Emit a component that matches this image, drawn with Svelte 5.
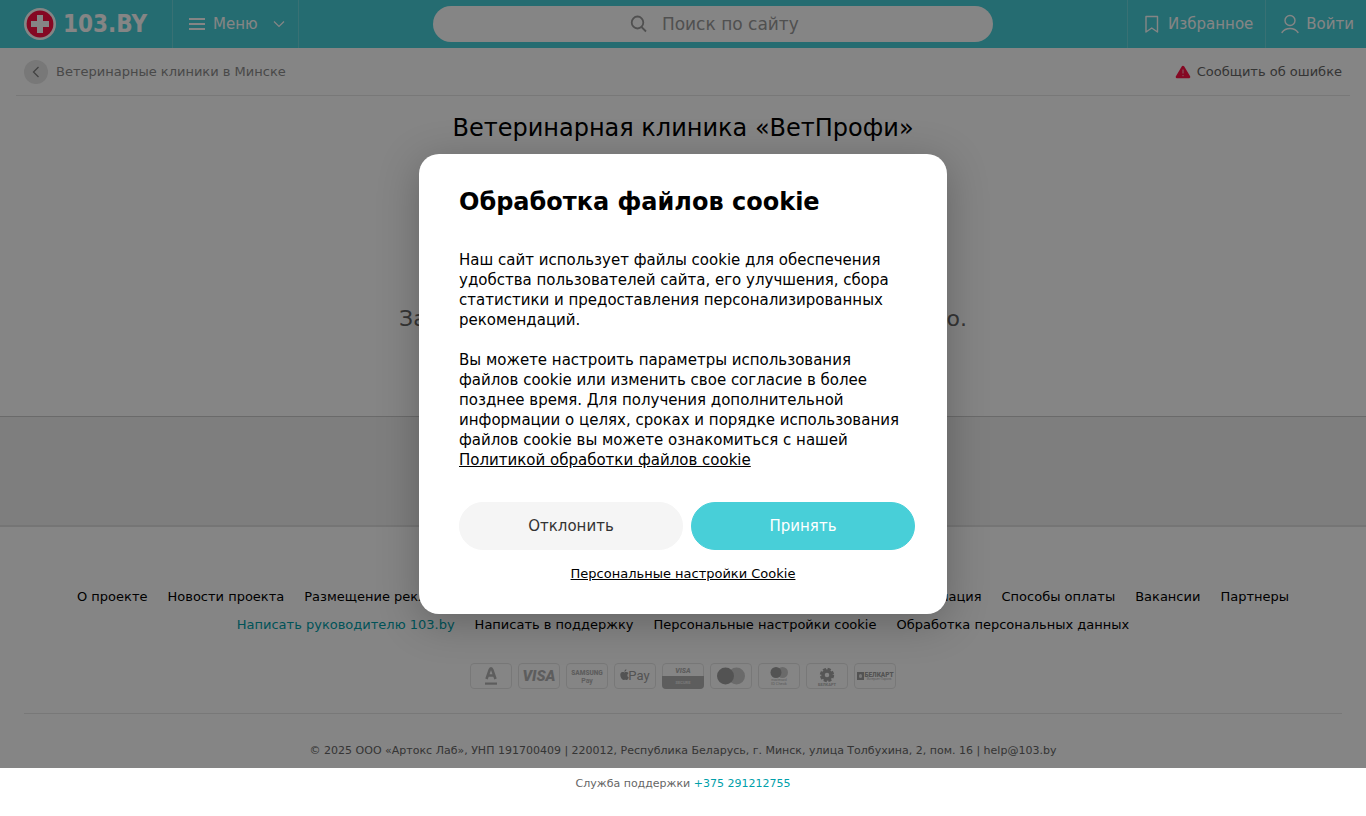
<!-- App.svelte -->
<script lang="ts">
  interface FooterLink {
    label: string;
    accent?: boolean;
  }

  const mainLinks: FooterLink[] = [
    { label: 'О проекте' },
    { label: 'Новости проекта' },
    { label: 'Размещение рекламы' },
    { label: 'Публичный договор' },
    { label: 'Политика использования' },
    { label: 'Правовая информация' },
    { label: 'Способы оплаты' },
    { label: 'Вакансии' },
    { label: 'Партнеры' },
  ];

  const supportLinks: FooterLink[] = [
    { label: 'Написать руководителю 103.by', accent: true },
    { label: 'Написать в поддержку' },
    { label: 'Персональные настройки cookie' },
    { label: 'Обработка персональных данных' },
  ];

  const payments = [
    'alfa', 'visa', 'samsung', 'apple', 'visa-secure',
    'mastercard', 'mastercard-id', 'belkart', 'belkart-internet',
  ];

  let query = $state('');
  let dialogOpen = $state(true);

  function closeDialog() {
    dialogOpen = false;
  }
</script>

<div class="page">
  <header class="header">
    <a class="logo" href="/" aria-label="103.by">
      <svg width="32" height="32" viewBox="0 0 32 32" aria-hidden="true">
        <circle cx="16" cy="16" r="16" fill="#fff" />
        <circle cx="16" cy="16" r="13.4" fill="#ff1144" />
        <path d="M13 7h6v6h6v6h-6v6h-6v-6H7v-6h6z" fill="#fff" />
      </svg>
      <span class="logo-text">103.BY</span>
    </a>

    <button class="menu" type="button">
      <svg width="16" height="12" viewBox="0 0 16 12" stroke="currentColor" stroke-width="2" aria-hidden="true">
        <path d="M0 1h16M0 6h16M0 11h16" />
      </svg>
      <span>Меню</span>
      <svg class="menu-arrow" width="12" height="8" viewBox="0 0 12 8" fill="none" stroke="currentColor" stroke-width="1.2" aria-hidden="true">
        <path d="M1 1.5l5 5 5-5" />
      </svg>
    </button>

    <div class="search-wrap">
      <label class="search">
        <svg width="18" height="18" viewBox="0 0 18 18" fill="none" stroke="currentColor" stroke-width="1.8" aria-hidden="true">
          <ellipse cx="7.5" cy="7.5" rx="5.8" ry="6" />
          <path d="M11.5 12l4.5 4.5" />
        </svg>
        <input type="text" placeholder="Поиск по сайту" aria-label="Поиск по сайту" bind:value={query} />
      </label>
    </div>

    <a class="header-link" href="/favorites">
      <svg width="18" height="20" viewBox="0 0 18 20" fill="none" stroke="currentColor" stroke-width="1.4" stroke-linejoin="round" aria-hidden="true">
        <path d="M3 2.500h11.500v15.500L8.750 14 3 18z" />
      </svg>
      Избранное
    </a>
    <a class="header-link" href="/login">
      <svg width="18" height="20" viewBox="0 0 18 20" fill="none" stroke="currentColor" stroke-width="1.4" stroke-linecap="round" aria-hidden="true">
        <circle cx="9" cy="6.5" r="5" />
        <path d="M1 18.5c2-3 4.500-4 8-4s6 1 8 4" />
      </svg>
      Войти
    </a>
  </header>

  <nav class="crumbs">
    <a class="crumb" href="/vet">
      <span class="crumb-back">
        <svg width="8" height="12" viewBox="0 0 8 12" fill="none" stroke="currentColor" stroke-width="1.3" aria-hidden="true">
          <path d="M6.500 1L1.500 6l5 5" />
        </svg>
      </span>
      Ветеринарные клиники в Минске
    </a>
    <a class="report" href="/report">
      <svg width="16" height="14" viewBox="0 0 16 14" aria-hidden="true">
        <path d="M8 2L14 12H2z" fill="#ff1144" stroke="#ff1144" stroke-width="2.600" stroke-linejoin="round" />
        <path d="M8 4.500v4M8 10v1.200" stroke="#fff" stroke-opacity="0.7" />
      </svg>
      Сообщить об ошибке
    </a>
  </nav>

  <main class="place">
    <h1>Ветеринарная клиника «ВетПрофи»</h1>
    <p>Запрошенное заведение постоянно недоступно.</p>
  </main>

  <div class="strip"></div>

  <footer class="footer">
    <nav class="links">
      <div class="links-row">
        {#each mainLinks as link}
          <a href="/info">{link.label}</a>
        {/each}
      </div>
      <div class="links-row">
        {#each supportLinks as link}
          <a href="/info" class:accent={link.accent}>{link.label}</a>
        {/each}
      </div>
    </nav>

    <div class="payments">
      {#each payments as name}
        <svg class="payment" width="42" height="26" viewBox="0 0 42 26" aria-hidden="true">
          <rect x="0.5" y="0.5" width="41" height="25" rx="3.5" fill="none" stroke="#e6e6e6" />
          {#if name === 'alfa'}
            <path d="M16.500 16L19.800 6.500q1.200-2.500 2.400 0L25.500 16M18 12.500h6" fill="none" stroke="#b3b3b3" stroke-width="2.600" />
            <rect x="15" y="19.500" width="12" height="2.200" />
          {:else if name === 'visa'}
            <text x="21" y="18" font-size="15" font-weight="900" font-style="italic">VISA</text>
          {:else if name === 'samsung'}
            <text x="21" y="12" font-size="6.500" font-weight="900">SAMSUNG</text>
            <text x="21" y="20" font-size="7" font-weight="600">Pay</text>
          {:else if name === 'apple'}
            <path class="strong" d="M10.500 9.500c1-.7 3.200-.6 4 .7-1.700 1.100-1.400 3.500.3 4.200-.6 1.600-1.500 2.800-2.500 2.600-.8-.4-1.400-.4-2.200 0-2.200.7-4.600-4.300-3.600-6.400.8-1.600 2.500-1.800 4-1.100zM10.300 8.800c0-1.400.8-2.300 2.100-2.600.1 1.400-.8 2.500-2.100 2.600z" />
            <text class="strong" x="25" y="17" font-size="13">Pay</text>
          {:else if name === 'visa-secure'}
            <path d="M0 13h42v9a4 4 0 0 1-4 4H4a4 4 0 0 1-4-4z" />
            <text x="21" y="10" font-size="7" font-weight="900" font-style="italic">VISA</text>
            <text x="21" y="21" font-size="4" font-weight="700" class="light">SECURE</text>
          {:else if name === 'mastercard'}
            <circle cx="26.500" cy="13" r="8.500" class="pale" />
            <circle cx="15.500" cy="13" r="8.500" class="strong" />
          {:else if name === 'mastercard-id'}
            <circle cx="24.500" cy="9.500" r="5.500" class="pale" />
            <circle cx="18" cy="9.500" r="5.500" class="strong" />
            <text x="21" y="18" font-size="3">mastercard</text>
            <text x="21" y="22" font-size="4">ID Check</text>
          {:else if name === 'belkart'}
            <circle cx="21" cy="12" r="4" fill="none" stroke="#a6a6a6" stroke-width="3.500" />
            <circle cx="21" cy="12" r="6" fill="none" stroke="#a6a6a6" stroke-width="2.400" stroke-dasharray="3.100 1.600" />
            <text x="21" y="23" font-size="4" font-weight="700">БЕЛКАРТ</text>
          {:else}
            <rect x="3" y="9" width="7" height="8" class="strong" />
            <rect x="5" y="11" width="3" height="4" rx="1.500" class="light" />
            <text x="25" y="14" font-size="6.500" font-weight="900" class="strong">БЕЛКАРТ</text>
            <text x="25" y="17" font-size="3">Интернет-Пароль</text>
          {/if}
        </svg>
      {/each}
    </div>

    <p class="copyright">
      © 2025 ООО «Артокс Лаб», УНП 191700409 | 220012, Республика Беларусь, г. Минск, улица Толбухина, 2, пом. 16 | help@103.by
    </p>
  </footer>

  {#if dialogOpen}
    <div class="overlay">
      <div class="dialog" role="dialog" aria-labelledby="cookie-title">
        <h2 id="cookie-title">Обработка файлов cookie</h2>
        <p>
          Наш сайт использует файлы cookie для обеспечения удобства пользователей сайта, его улучшения, сбора
          статистики и предоставления персонализированных рекомендаций.
        </p>
        <p>
          Вы можете настроить параметры использования файлов cookie или изменить свое согласие в более позднее
          время. Для получения дополнительной информации о целях, сроках и порядке использования файлов cookie вы
          можете ознакомиться с нашей <a href="/cookie-policy">Политикой обработки файлов cookie</a>
        </p>
        <div class="actions">
          <button class="btn" type="button" onclick={closeDialog}>Отклонить</button>
          <button class="btn btn--primary" type="button" onclick={closeDialog}>Принять</button>
        </div>
        <button class="settings" type="button">Персональные настройки Cookie</button>
      </div>
    </div>
  {/if}
</div>

<p class="support">Служба поддержки <a href="tel:+375291212755">+375 291212755</a></p>

<style>
  :global(body) {
    background: #fff;
    color: #000;
    font-family: 'DejaVu Sans', sans-serif;
  }

  a {
    color: inherit;
    text-decoration: none;
  }

  button {
    font-family: inherit;
    cursor: pointer;
  }

  .page {
    position: relative;
  }

  /* Header */
  .header {
    display: flex;
    height: 48px;
    background: #48cfd8;
    color: #fff;
    font-size: 15px;
  }

  .logo {
    display: flex;
    align-items: center;
    gap: 7px;
    padding: 0 25px 0 24px;
  }

  .logo-text {
    font-family: 'DejaVu Sans Condensed', 'DejaVu Sans', sans-serif;
    font-size: 24px;
    font-weight: 700;
  }

  .menu {
    display: flex;
    align-items: center;
    gap: 8px;
    padding: 0 13px 0 16px;
    border: 0;
    border-left: 1px solid rgba(255, 255, 255, 0.2);
    border-right: 1px solid rgba(255, 255, 255, 0.2);
    background: none;
    color: inherit;
    font-size: 15px;
  }

  .menu-arrow {
    margin-left: 7px;
  }

  .search-wrap {
    flex: 1;
    display: flex;
    align-items: center;
    justify-content: center;
  }

  .search {
    box-sizing: border-box;
    display: flex;
    align-items: center;
    justify-content: center;
    gap: 14px;
    width: 560px;
    height: 36px;
    padding-left: 6px;
    border-radius: 18px;
    background: #fff;
    color: #999;
  }

  .search input {
    width: 140px;
    padding: 0;
    border: 0;
    outline: 0;
    background: none;
    font-family: inherit;
    font-size: 17px;
  }

  .search input::placeholder {
    color: #999;
  }

  .header-link {
    display: flex;
    align-items: center;
    gap: 7px;
    padding: 0 12px 0 15px;
    border-left: 1px solid rgba(255, 255, 255, 0.2);
  }

  /* Breadcrumbs */
  .crumbs {
    display: flex;
    align-items: center;
    justify-content: space-between;
    height: 47px;
    margin: 0 16px;
    padding: 0 8px;
    border-bottom: 1px solid #e6e6e6;
    font-size: 13px;
  }

  .crumb,
  .report {
    display: flex;
    align-items: center;
  }

  .crumb {
    gap: 8px;
    color: #8c8c8c;
  }

  .crumb-back {
    display: flex;
    align-items: center;
    justify-content: center;
    width: 24px;
    height: 24px;
    border-radius: 50%;
    background: #e6e6e6;
    color: #808080;
  }

  .report {
    gap: 6px;
    color: #666;
  }

  /* Place */
  .place {
    height: 320px;
    text-align: center;
  }

  .place h1 {
    margin: 0;
    padding-top: 16px;
    font-size: 24px;
    font-weight: 400;
    line-height: 32px;
  }

  .place p {
    margin: 159px 0 0;
    color: #666;
    font-size: 22px;
    line-height: 32px;
  }

  .strip {
    height: 108px;
    border-top: 1px solid #ccc;
    border-bottom: 2px solid #e0e0e0;
    background: #f2f2f2;
  }

  /* Footer */
  .footer {
    padding: 56px 24px 0;
  }

  .links-row {
    display: flex;
    justify-content: center;
    gap: 20px;
    font-size: 13px;
    line-height: 28px;
    white-space: nowrap;
  }

  .links-row .accent {
    color: #00a0aa;
  }

  .payments {
    display: flex;
    justify-content: center;
    gap: 6px;
    padding: 24px 0;
    border-bottom: 1px solid #e6e6e6;
  }

  .payment {
    fill: #b3b3b3;
    font-family: Roboto, sans-serif;
    text-anchor: middle;
  }

  .payment .pale {
    fill: #ccc;
  }

  .payment .strong {
    fill: #a0a0a0;
  }

  .payment .light {
    fill: #e6e6e6;
  }

  .copyright,
  .support {
    margin: 0;
    color: #666;
    font-size: 11px;
    text-align: center;
  }

  .copyright {
    padding-top: 20px;
    line-height: 34px;
  }

  .support {
    line-height: 32px;
  }

  .support a {
    color: #00a0aa;
  }

  /* Cookie dialog */
  .overlay {
    position: absolute;
    inset: 0;
    display: flex;
    align-items: center;
    justify-content: center;
    background: rgba(0, 0, 0, 0.48);
  }

  .dialog {
    box-sizing: border-box;
    width: 528px;
    padding: 32px 40px;
    border-radius: 20px;
    background: #fff;
    box-shadow: 0 8px 40px rgba(0, 0, 0, 0.25);
  }

  .dialog h2 {
    margin: 0 0 32px;
    font-size: 24px;
    line-height: 32px;
  }

  .dialog p {
    margin: 0 0 20px;
    font-size: 15px;
    line-height: 20px;
  }

  .dialog p a {
    text-decoration: underline;
  }

  .actions {
    display: flex;
    gap: 8px;
    margin: 32px -8px 0 0;
  }

  .btn {
    flex: 1;
    height: 48px;
    border: 1px solid #f5f5f5;
    border-radius: 24px;
    background: #f5f5f5;
    color: #333;
    font-size: 15px;
  }

  .btn--primary {
    border-color: #48cfd8;
    background: #48cfd8;
    color: #fff;
  }

  .settings {
    display: block;
    margin: 16px auto 0;
    padding: 0;
    border: 0;
    background: none;
    color: #000;
    font-size: 13px;
    line-height: 16px;
    text-decoration: underline;
  }
</style>
